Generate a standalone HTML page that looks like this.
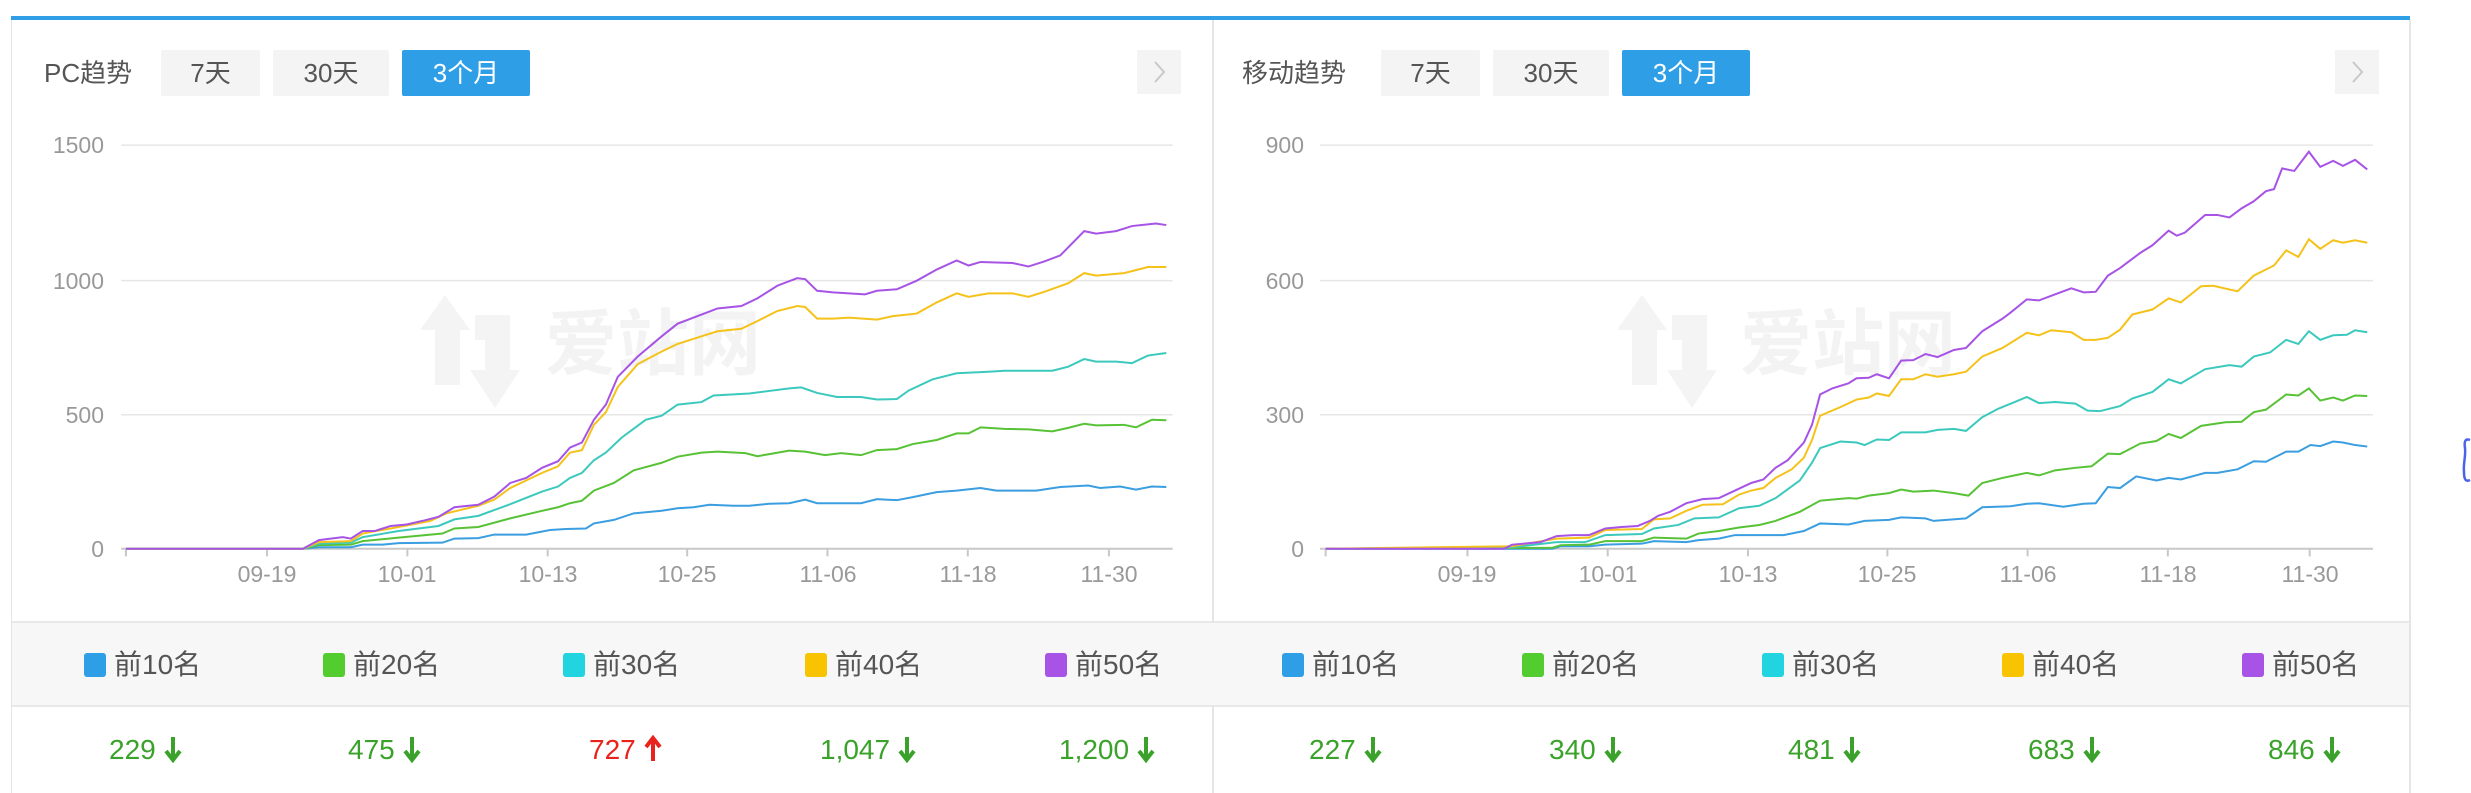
<!DOCTYPE html>
<html><head><meta charset="utf-8"><style>
*{margin:0;padding:0;box-sizing:border-box}
body{width:2471px;height:793px;background:#fff;position:relative;overflow:hidden;font-family:"Liberation Sans","Noto Sans CJK SC",sans-serif;}
.a{position:absolute;white-space:nowrap}
.btn{position:absolute;top:50px;height:46px;line-height:46px;text-align:center;background:#f4f4f4;color:#555;font-size:26px;border-radius:2px}
.on{background:#2e9fe6;color:#fff}
.title{position:absolute;top:50px;line-height:46px;font-size:26px;color:#555}
.yl{position:absolute;width:70px;text-align:right;font-size:23px;color:#999;line-height:24px}
.xl{position:absolute;width:90px;text-align:center;font-size:23px;color:#999;top:562px;line-height:24px}
.lg{position:absolute;top:649px;font-size:28px;color:#555;line-height:32px}
.sq{display:inline-block;width:22px;height:24px;border-radius:3px;vertical-align:-3px;margin-right:8px}
.v{position:absolute;top:733px;font-size:28px;line-height:34px;color:#3aa22a}
.arr{display:inline-block;vertical-align:-4px;margin-left:8px}
.wm{position:absolute;font-size:72px;color:#f3f3f3;font-weight:bold}
</style></head><body>
<div class="a" style="left:11px;top:16px;width:2399px;height:4px;background:#2e9fe6"></div>
<div class="a" style="left:11px;top:20px;width:1px;height:773px;background:#e5e5e5"></div>
<div class="a" style="left:1212px;top:20px;width:2px;height:773px;background:#e5e5e5"></div>
<div class="a" style="left:2409px;top:20px;width:2px;height:773px;background:#e5e5e5"></div>
<div class="a" style="left:12px;top:621px;width:2397px;height:86px;background:#f7f7f7;border-top:2px solid #e8e8e8;border-bottom:2px solid #e8e8e8"></div>

<div class="wm" style="left:545px;top:285px">爱站网</div>
<div class="wm" style="left:1740px;top:285px">爱站网</div>
<svg class="a" style="left:415px;top:290px" width="110" height="120"><path d="M30 5 L55 40 L45 40 L45 95 L20 95 L20 40 L5 40 Z" fill="#f4f4f4"/><path d="M60 25 L95 25 L95 80 L105 80 L80 118 L55 80 L70 80 L70 50 L60 50Z" fill="#f4f4f4"/></svg>
<svg class="a" style="left:1612px;top:290px" width="110" height="120"><path d="M30 5 L55 40 L45 40 L45 95 L20 95 L20 40 L5 40 Z" fill="#f4f4f4"/><path d="M60 25 L95 25 L95 80 L105 80 L80 118 L55 80 L70 80 L70 50 L60 50Z" fill="#f4f4f4"/></svg>

<div class="title" style="left:44px">PC趋势</div>
<div class="btn" style="left:161px;width:99px">7天</div>
<div class="btn" style="left:273px;width:116px">30天</div>
<div class="btn on" style="left:402px;width:128px">3个月</div>
<div class="a" style="left:1137px;top:50px;width:44px;height:44px;background:#f4f4f4"><svg width="44" height="44"><path d="M18 12 L27 22 L18 32" stroke="#c8c8c8" stroke-width="2" fill="none"/></svg></div>
<div class="title" style="left:1242px">移动趋势</div>
<div class="btn" style="left:1381px;width:99px">7天</div>
<div class="btn" style="left:1493px;width:116px">30天</div>
<div class="btn on" style="left:1622px;width:128px">3个月</div>
<div class="a" style="left:2335px;top:50px;width:44px;height:44px;background:#f4f4f4"><svg width="44" height="44"><path d="M18 12 L27 22 L18 32" stroke="#c8c8c8" stroke-width="2" fill="none"/></svg></div>

<div class="yl" style="left:34px;top:133px">1500</div>
<div class="yl" style="left:34px;top:269px">1000</div>
<div class="yl" style="left:34px;top:403px">500</div>
<div class="yl" style="left:34px;top:537px">0</div>
<div class="yl" style="left:1234px;top:133px">900</div>
<div class="yl" style="left:1234px;top:269px">600</div>
<div class="yl" style="left:1234px;top:403px">300</div>
<div class="yl" style="left:1234px;top:537px">0</div>
<div class="xl" style="left:222px">09-19</div><div class="xl" style="left:362px">10-01</div><div class="xl" style="left:503px">10-13</div><div class="xl" style="left:642px">10-25</div><div class="xl" style="left:783px">11-06</div><div class="xl" style="left:923px">11-18</div><div class="xl" style="left:1064px">11-30</div>
<div class="xl" style="left:1422px">09-19</div><div class="xl" style="left:1563px">10-01</div><div class="xl" style="left:1703px">10-13</div><div class="xl" style="left:1842px">10-25</div><div class="xl" style="left:1983px">11-06</div><div class="xl" style="left:2123px">11-18</div><div class="xl" style="left:2265px">11-30</div>

<svg class="a" style="left:0;top:0" width="1250" height="793" viewBox="0 0 1568 1568" preserveAspectRatio="none">
<g fill="none">
<path d="M152 287H1471M152 555H1471M152 820H1471" stroke="#e6e6e6" stroke-width="1.5" vector-effect="non-scaling-stroke"/>
<path d="M152 1085H1471M158 1085V1100M335 1085V1100M511 1085V1100M687 1085V1100M862 1085V1100M1038 1085V1100M1214 1085V1100M1391 1085V1100" stroke="#c8c8c8" stroke-width="2" vector-effect="non-scaling-stroke"/>
<path stroke="#3a9ee0" stroke-width="2" vector-effect="non-scaling-stroke" d="M158 1085L380 1085L400 1082L440 1082L455 1077L480 1077L500 1074L555 1073L570 1065L600 1064L620 1057L660 1057L690 1048L710 1046L735 1045L745 1035L770 1028L795 1015L830 1010L850 1005L870 1003L890 998L920 1000L940 1000L965 996L990 995L1010 988L1025 995L1050 995L1080 995L1100 987L1125 989L1145 983L1175 973L1200 970L1230 965L1250 970L1280 970L1300 970L1330 963L1365 960L1380 965L1405 962L1425 968L1445 962L1463 963"/>
<path stroke="#58c236" stroke-width="2" vector-effect="non-scaling-stroke" d="M158 1085L380 1085L400 1078L440 1077L455 1070L500 1063L555 1055L570 1045L600 1042L640 1025L680 1010L700 1003L715 995L730 990L745 970L770 955L795 930L830 915L850 903L880 895L900 893L935 896L950 902L965 898L990 891L1010 893L1035 900L1055 896L1080 900L1100 890L1125 888L1145 878L1175 870L1200 857L1215 857L1230 845L1260 848L1290 849L1320 853L1340 846L1360 838L1375 841L1410 840L1425 845L1445 830L1463 831"/>
<path stroke="#3cc9bd" stroke-width="2" vector-effect="non-scaling-stroke" d="M158 1085L380 1085L400 1075L440 1073L455 1062L500 1050L550 1040L570 1027L600 1020L640 997L680 972L700 962L715 945L730 935L745 910L760 895L780 865L810 830L830 822L850 800L880 795L895 782L940 778L965 773L990 768L1005 766L1025 777L1050 785L1080 785L1100 790L1125 789L1140 772L1170 750L1200 738L1240 735L1260 733L1320 733L1340 725L1360 710L1375 715L1400 715L1420 718L1440 703L1463 698"/>
<path stroke="#f5c21a" stroke-width="2" vector-effect="non-scaling-stroke" d="M158 1085L380 1085L400 1072L440 1070L455 1055L500 1042L540 1030L560 1015L600 1000L620 988L640 965L680 935L700 922L715 895L730 890L745 840L760 815L775 765L800 720L830 695L850 680L880 665L900 655L930 650L950 635L975 615L1000 605L1010 607L1025 630L1045 630L1065 628L1100 632L1120 625L1150 620L1175 598L1200 580L1215 587L1240 580L1270 580L1290 587L1310 577L1340 560L1360 540L1375 545L1410 540L1440 528L1463 528"/>
<path stroke="#a653e6" stroke-width="2" vector-effect="non-scaling-stroke" d="M158 1085L380 1085L400 1068L430 1062L440 1065L455 1050L470 1050L490 1040L510 1037L530 1030L550 1022L570 1003L600 998L620 982L640 955L660 945L680 925L700 912L715 885L730 875L745 830L760 800L775 745L800 705L830 665L850 640L880 622L900 610L930 605L950 590L975 565L1000 550L1010 552L1025 575L1045 578L1065 580L1085 582L1100 575L1125 572L1150 555L1175 533L1200 515L1215 525L1230 518L1270 520L1290 527L1310 517L1330 505L1360 457L1375 462L1400 457L1420 447L1450 442L1463 445"/>
</g></svg>

<svg class="a" style="left:1200px;top:0" width="1271" height="793" viewBox="0 0 1568 1568" preserveAspectRatio="none">
<g fill="none">
<path d="M148 287H1447M148 555H1447M148 820H1447" stroke="#e6e6e6" stroke-width="1.5" vector-effect="non-scaling-stroke"/>
<path d="M148 1085H1447M155 1085V1100M330 1085V1100M503 1085V1100M676 1085V1100M848 1085V1100M1021 1085V1100M1194 1085V1100M1369 1085V1100" stroke="#c8c8c8" stroke-width="2" vector-effect="non-scaling-stroke"/>
<path stroke="#3a9ee0" stroke-width="2" vector-effect="non-scaling-stroke" d="M155 1085L435 1085L445 1080L480 1080L500 1077L545 1075L560 1070L600 1072L615 1068L640 1065L660 1058L690 1058L720 1058L745 1050L765 1035L800 1037L820 1030L850 1028L865 1023L895 1025L905 1030L945 1025L965 1003L1000 1001L1020 996L1035 995L1065 1002L1090 996L1105 995L1120 963L1135 965L1155 942L1180 950L1195 945L1210 948L1240 935L1255 935L1280 928L1300 912L1315 913L1340 893L1355 893L1370 880L1382 882L1398 873L1410 875L1425 880L1440 883"/>
<path stroke="#58c236" stroke-width="2" vector-effect="non-scaling-stroke" d="M155 1085L435 1083L445 1078L480 1077L500 1070L545 1070L560 1063L600 1065L615 1055L640 1050L665 1043L690 1038L710 1030L740 1012L765 990L800 985L810 986L825 980L850 975L865 968L880 972L905 970L930 975L948 980L965 955L990 945L1005 940L1020 935L1035 940L1055 930L1080 925L1100 922L1120 897L1135 898L1160 877L1180 872L1195 858L1210 866L1235 842L1265 835L1285 834L1300 815L1315 810L1340 780L1355 782L1368 768L1382 792L1398 786L1410 792L1425 782L1440 783"/>
<path stroke="#3cc9bd" stroke-width="2" vector-effect="non-scaling-stroke" d="M155 1085L385 1082L440 1072L475 1072L500 1058L545 1056L560 1045L590 1038L610 1025L640 1023L665 1005L690 1000L710 985L740 950L755 915L765 886L790 873L810 875L820 880L835 869L850 870L865 855L895 855L910 850L930 848L945 852L965 825L985 808L1005 795L1020 785L1035 797L1055 795L1080 798L1095 812L1110 813L1135 803L1150 788L1175 775L1195 750L1210 758L1240 730L1270 722L1285 725L1300 705L1320 697L1340 672L1355 680L1368 655L1382 672L1398 663L1415 662L1425 653L1440 657"/>
<path stroke="#f5c21a" stroke-width="2" vector-effect="non-scaling-stroke" d="M155 1085L385 1080L440 1065L480 1063L500 1048L545 1046L560 1027L580 1025L600 1010L620 998L645 997L665 978L680 970L695 965L710 945L730 928L745 905L755 870L765 822L790 805L810 790L825 786L835 778L850 783L865 750L880 750L895 740L910 745L930 740L945 735L965 705L990 688L1020 658L1035 663L1050 653L1075 657L1090 672L1105 672L1120 668L1135 652L1150 622L1175 612L1195 590L1210 598L1235 566L1250 565L1280 576L1300 545L1325 525L1340 495L1355 508L1368 473L1382 492L1398 475L1410 480L1425 475L1440 480"/>
<path stroke="#a653e6" stroke-width="2" vector-effect="non-scaling-stroke" d="M155 1085L375 1085L385 1077L400 1075L420 1072L440 1060L460 1058L480 1058L500 1045L520 1042L540 1040L555 1030L565 1020L580 1012L600 995L620 987L640 985L660 970L680 955L695 948L710 925L725 910L745 875L755 840L765 780L780 768L800 758L810 748L825 747L835 740L850 748L865 713L880 712L895 700L910 706L930 692L945 688L965 655L990 630L1000 618L1020 592L1035 594L1055 582L1075 570L1090 578L1105 577L1120 545L1135 530L1160 500L1175 485L1195 456L1205 466L1215 460L1240 425L1255 425L1270 430L1285 412L1300 398L1315 378L1325 374L1335 333L1350 338L1368 300L1382 330L1398 318L1410 328L1425 316L1440 335"/>
</g></svg>

<div class="lg" style="left:84px"><span class="sq" style="background:#2e9fe6"></span>前10名</div>
<div class="lg" style="left:323px"><span class="sq" style="background:#52cc2e"></span>前20名</div>
<div class="lg" style="left:563px"><span class="sq" style="background:#22d3e0"></span>前30名</div>
<div class="lg" style="left:805px"><span class="sq" style="background:#f8c300"></span>前40名</div>
<div class="lg" style="left:1045px"><span class="sq" style="background:#a653e6"></span>前50名</div>
<div class="lg" style="left:1282px"><span class="sq" style="background:#2e9fe6"></span>前10名</div>
<div class="lg" style="left:1522px"><span class="sq" style="background:#52cc2e"></span>前20名</div>
<div class="lg" style="left:1762px"><span class="sq" style="background:#22d3e0"></span>前30名</div>
<div class="lg" style="left:2002px"><span class="sq" style="background:#f8c300"></span>前40名</div>
<div class="lg" style="left:2242px"><span class="sq" style="background:#a653e6"></span>前50名</div>

<div class="v" style="left:109px">229<svg class="arr" width="18" height="28"><path d="M9 2V24M2 16L9 25L16 16" stroke="#3aa22a" stroke-width="4" fill="none"/></svg></div>
<div class="v" style="left:348px">475<svg class="arr" width="18" height="28"><path d="M9 2V24M2 16L9 25L16 16" stroke="#3aa22a" stroke-width="4" fill="none"/></svg></div>
<div class="v" style="left:589px;color:#e8231b">727<svg class="arr" width="18" height="28"><path d="M9 26V4M2 12L9 3L16 12" stroke="#e8231b" stroke-width="4" fill="none"/></svg></div>
<div class="v" style="left:820px">1,047<svg class="arr" width="18" height="28"><path d="M9 2V24M2 16L9 25L16 16" stroke="#3aa22a" stroke-width="4" fill="none"/></svg></div>
<div class="v" style="left:1059px">1,200<svg class="arr" width="18" height="28"><path d="M9 2V24M2 16L9 25L16 16" stroke="#3aa22a" stroke-width="4" fill="none"/></svg></div>
<div class="v" style="left:1309px">227<svg class="arr" width="18" height="28"><path d="M9 2V24M2 16L9 25L16 16" stroke="#3aa22a" stroke-width="4" fill="none"/></svg></div>
<div class="v" style="left:1549px">340<svg class="arr" width="18" height="28"><path d="M9 2V24M2 16L9 25L16 16" stroke="#3aa22a" stroke-width="4" fill="none"/></svg></div>
<div class="v" style="left:1788px">481<svg class="arr" width="18" height="28"><path d="M9 2V24M2 16L9 25L16 16" stroke="#3aa22a" stroke-width="4" fill="none"/></svg></div>
<div class="v" style="left:2028px">683<svg class="arr" width="18" height="28"><path d="M9 2V24M2 16L9 25L16 16" stroke="#3aa22a" stroke-width="4" fill="none"/></svg></div>
<div class="v" style="left:2268px">846<svg class="arr" width="18" height="28"><path d="M9 2V24M2 16L9 25L16 16" stroke="#3aa22a" stroke-width="4" fill="none"/></svg></div>

<svg class="a" style="left:2460px;top:436px" width="11" height="50"><path d="M10 4 C5 2 4 6 5 12 C6 20 3 28 4 36 C4 44 6 46 10 44" stroke="#4a63e8" stroke-width="2.5" fill="none"/></svg>
</body></html>
